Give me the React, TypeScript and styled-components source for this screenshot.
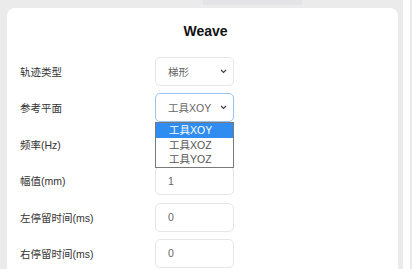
import React from "react";
import styled, { createGlobalStyle } from "styled-components";

const Global = createGlobalStyle`
  html, body { margin: 0; padding: 0; }
  body {
    background: #ebebec;
    font-family: "Liberation Sans", "Noto Sans CJK SC", sans-serif;
    overflow: hidden;
  }
`;

const Page = styled.div`
  display: flex;
  height: 269px;
  overflow: hidden;
`;

const MainCol = styled.div`
  flex: 0 0 391px;
  padding-left: 7px;
  display: flex;
  flex-direction: column;
`;

const TopStrip = styled.div`
  height: 8px;
  display: flex;
  align-items: flex-start;
`;

const Tab = styled.div`
  margin-left: 196px;
  width: 99px;
  height: 5px;
  background: #e4e4e6;
`;

const SidePanel = styled.div`
  flex: 0 0 7px;
  margin-left: 5px;
  background: #ffffff;
`;

const Card = styled.div`
  flex: 1;
  background: #ffffff;
  border-radius: 8px 8px 0 0;
  padding: 13px 13px 0 13px;
`;

const Title = styled.h1`
  margin: 0;
  height: 20px;
  line-height: 20px;
  text-align: center;
  font-size: 14px;
  font-weight: 700;
  color: #111;
  padding-left: 6px;
`;

const Form = styled.div`
  margin-top: 16px;
  display: grid;
  grid-template-columns: 135px 79px;
  row-gap: 7.4px;
  align-items: center;
`;

const Label = styled.div`
  font-size: 10.5px;
  color: #333;
  font-family: "Liberation Sans", "Noto Sans CJK SC", sans-serif;
`;

const Field = styled.div`
  position: relative;
  height: 29px;
`;

const Box = styled.div<{ $focused?: boolean }>`
  box-sizing: border-box;
  height: 29px;
  border: 1px solid ${(p) => (p.$focused ? "#98c3ec" : "#e6e6e8")};
  border-radius: 5px;
  background: #fff;
  display: flex;
  align-items: center;
  padding: 0 6px 0 12px;
  font-size: 10.5px;
  color: #666;
`;

const SelectText = styled.span`
  flex: 1;
`;

const Dropdown = styled.div`
  position: absolute;
  left: 0;
  top: 100%;
  width: 79px;
  box-sizing: border-box;
  border: 1px solid #7a7a7a;
  background: #fff;
  z-index: 5;
`;

const Option = styled.div<{ $active?: boolean }>`
  height: 14.5px;
  line-height: 14.5px;
  padding-left: 13px;
  font-size: 10.5px;
  color: ${(p) => (p.$active ? "#fff" : "#555")};
  background: ${(p) => (p.$active ? "#2f8cf0" : "#fff")};
`;

const Chevron = () => (
  <svg width="7" height="5" viewBox="0 0 7 5">
    <path d="M1 1 L3.5 3.5 L6 1" fill="none" stroke="#444" strokeWidth="1.2" />
  </svg>
);

export default function App() {
  return (
    <>
      <Global />
      <Page>
        <MainCol>
          <TopStrip>
            <Tab />
          </TopStrip>
          <Card>
            <Title>Weave</Title>
            <Form>
              <Label>轨迹类型</Label>
              <Field>
                <Box>
                  <SelectText>梯形</SelectText>
                  <Chevron />
                </Box>
              </Field>

              <Label>参考平面</Label>
              <Field>
                <Box $focused>
                  <SelectText>工具XOY</SelectText>
                  <Chevron />
                </Box>
                <Dropdown>
                  <Option $active>工具XOY</Option>
                  <Option>工具XOZ</Option>
                  <Option>工具YOZ</Option>
                </Dropdown>
              </Field>

              <Label>频率(Hz)</Label>
              <Field>
                <Box />
              </Field>

              <Label>幅值(mm)</Label>
              <Field>
                <Box>1</Box>
              </Field>

              <Label>左停留时间(ms)</Label>
              <Field>
                <Box>0</Box>
              </Field>

              <Label>右停留时间(ms)</Label>
              <Field>
                <Box>0</Box>
              </Field>
            </Form>
          </Card>
        </MainCol>
        <SidePanel />
      </Page>
    </>
  );
}
